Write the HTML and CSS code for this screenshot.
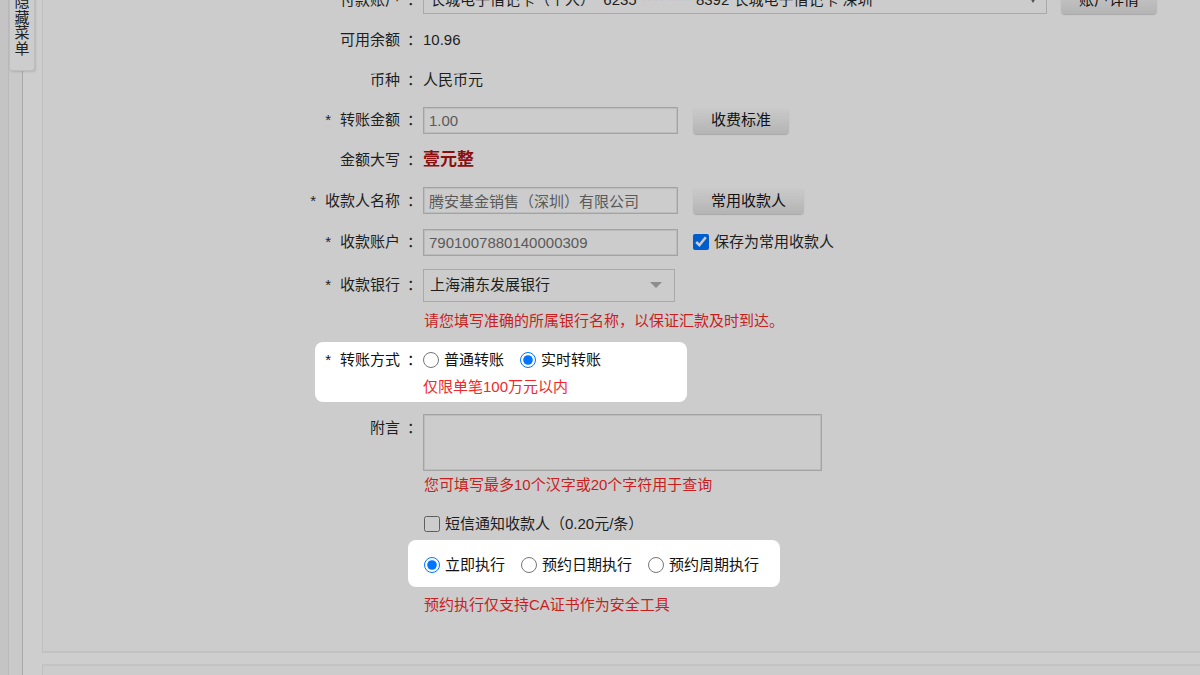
FILE: index.html
```html
<!DOCTYPE html>
<html lang="zh-CN">
<head>
  <meta charset="UTF-8" />
  <meta name="viewport" content="width=device-width, initial-scale=1.0"/>
  <title>单笔转账</title>
  <link rel="stylesheet" href="styles.css">
</head>
<body>
  <aside class="side">
    <div class="s1"></div>
    <div class="s2"></div>
    <div class="s3"></div>
    <div class="menu-tab"><span>隐藏菜单</span></div>
  </aside>

  <div class="main">
    <div class="panel">
      <form class="form">
        <div class="row">
          <div class="lbl">付款账户</div><div class="colon">：</div>
          <div class="val">
            <div class="select wide">
              <span>长城电子借记卡（个人） &nbsp;6235 **** **** 8392 长城电子借记卡 深圳</span>
              <i class="arrow small"></i>
            </div>
            <button type="button" class="btn top">账户详情</button>
          </div>
        </div>

        <div class="row">
          <div class="lbl">可用余额</div><div class="colon">：</div>
          <div class="val">10.96</div>
        </div>

        <div class="row">
          <div class="lbl">币种</div><div class="colon">：</div>
          <div class="val">人民币元</div>
        </div>

        <div class="row">
          <div class="lbl"><span class="req">*</span>转账金额</div><div class="colon">：</div>
          <div class="val">
            <input class="field" type="text" value="1.00">
            <button type="button" class="btn">收费标准</button>
          </div>
        </div>

        <div class="row">
          <div class="lbl">金额大写</div><div class="colon">：</div>
          <div class="val"><b class="amount">壹元整</b></div>
        </div>

        <div class="row r41">
          <div class="lbl"><span class="req">*</span>收款人名称</div><div class="colon">：</div>
          <div class="val">
            <input class="field" type="text" value="腾安基金销售（深圳）有限公司">
            <button type="button" class="btn">常用收款人</button>
          </div>
        </div>

        <div class="row r42">
          <div class="lbl"><span class="req">*</span>收款账户</div><div class="colon">：</div>
          <div class="val">
            <input class="field" type="text" value="7901007880140000309">
            <label class="check save"><input class="dim" type="checkbox" checked>保存为常用收款人</label>
          </div>
        </div>

        <div class="row r44">
          <div class="lbl"><span class="req">*</span>收款银行</div><div class="colon">：</div>
          <div class="val">
            <div class="select bank"><span>上海浦东发展银行</span><i class="arrow"></i></div>
          </div>
        </div>
        <div class="hint">请您填写准确的所属银行名称，以保证汇款及时到达。</div>

        <div class="spot way">
          <div class="row">
            <div class="lbl"><span class="req">*</span>转账方式</div><div class="colon">：</div>
            <div class="val">
              <label class="opt"><input type="radio" name="way">普通转账</label>
              <label class="opt"><input type="radio" name="way" checked>实时转账</label>
            </div>
          </div>
          <div class="hint">仅限单笔100万元以内</div>
        </div>

        <div class="row memo-row">
          <div class="lbl">附言</div><div class="colon">：</div>
          <div class="val"><textarea class="memo"></textarea></div>
        </div>
        <div class="hint">您可填写最多10个汉字或20个字符用于查询</div>

        <div class="sms">
          <label class="check"><input class="dim" type="checkbox">短信通知收款人（0.20元/条）</label>
        </div>

        <div class="spot when">
          <label class="opt"><input type="radio" name="when" checked>立即执行</label>
          <label class="opt"><input type="radio" name="when">预约日期执行</label>
          <label class="opt"><input type="radio" name="when">预约周期执行</label>
        </div>
        <div class="hint last">预约执行仅支持CA证书作为安全工具</div>
      </form>
    </div>
    <div class="panel next"></div>
  </div>
</body>
</html>
```

FILE: styles.css
```css
* {
  box-sizing: border-box;
}
html, body {
  margin: 0;
}
body {
  width: 1200px;
  height: 675px;
  overflow: hidden;
  display: flex;
  background: #cecece;
  color: #1e1e1e;
  font: 15px/20px "Liberation Sans", "Noto Sans CJK SC", sans-serif;
}

/* left menu strip */
.side {
  position: relative;
  width: 42px;
  flex-shrink: 0;
  display: flex;
}
.side .s1 {
  width: 9px;
  background: #c4c4c4;
  border-right: 1px solid #b9b9b9;
}
.side .s2 {
  width: 14px;
  background: #c9c9c9;
  border-right: 1px solid #a9a9a9;
}
.side .s3 {
  flex: 1;
  background: #cecece;
}
.menu-tab {
  position: absolute;
  left: 9px;
  top: -20px;
  width: 26px;
  padding: 14px 0 14px;
  background: #cdcdcd;
  border: 1px solid #bdbdbd;
  border-top: none;
  border-radius: 0 0 3px 3px;
  box-shadow: 1px 1px 2px rgba(0,0,0,0.12);
}
.menu-tab span {
  display: block;
  width: 15px;
  margin: 0 auto;
  font-size: 15px;
  line-height: 15.5px;
  color: #222;
}

/* content panels */
.main {
  flex: 1;
  display: flex;
  flex-direction: column;
}
.panel {
  height: 653px;
  background: #cccccc;
  border-left: 1px solid #c0c0c0;
  border-bottom: 2px solid #c2c2c2;
  overflow: hidden;
}
.panel.next {
  flex: 1;
  margin-top: 11px;
  border-bottom: none;
  border-top: 2px solid #c3c3c3;
}

.form {
  margin-top: -20px;
}
.row {
  display: grid;
  grid-template-columns: 357px 23px 1fr;
  align-items: center;
  height: 40px;
}
.row.r41 { height: 41px; }
.row.r42 { height: 42px; }
.row.r44 { height: 44px; }
.lbl {
  text-align: right;
  white-space: nowrap;
}
.req {
  margin-right: 9px;
}
.colon {
  padding-left: 7px;
}
.val {
  display: flex;
  align-items: center;
  white-space: nowrap;
}
.amount {
  font-size: 17px;
  color: #8c0e0e;
}

.field {
  width: 255px;
  height: 27px;
  padding: 0 5px;
  font: inherit;
  color: #5a5a5a;
  background: #cccccc;
  border: 1px solid #a3a3a3;
  box-shadow: inset 0 0 0 1px #bcbcbc;
  outline: none;
}
.btn {
  height: 27px;
  margin-left: 15px;
  padding: 0 18px;
  font: inherit;
  color: #111;
  border: none;
  border-radius: 4px;
  background: linear-gradient(#cbcbcb, #b4b4b4);
  box-shadow: 0 1px 1px rgba(0,0,0,0.18);
}
.btn.top {
  height: 28px;
  margin-left: 14px;
}

.select {
  display: flex;
  align-items: center;
  justify-content: space-between;
  padding: 0 12px 0 6px;
  border: 1px solid #a9a9a9;
  background: #cccccc;
}
.select.wide {
  width: 624px;
  height: 27px;
  padding-right: 10px;
}
.select.bank {
  width: 252px;
  height: 33px;
}
.arrow {
  width: 0;
  height: 0;
  border-left: 6px solid transparent;
  border-right: 6px solid transparent;
  border-top: 6px solid #8c8c8c;
}
.arrow.small {
  border-width: 5px 3px 0;
  border-top-color: #555;
}

.check {
  display: flex;
  align-items: center;
}
.check.save {
  margin-left: 15px;
}
.check input,
.opt input {
  width: 16px;
  height: 16px;
  margin: 0 5px 0 0;
}
.dim {
  filter: brightness(0.8);
}

.hint {
  height: 28px;
  margin-left: 381px;
  display: flex;
  align-items: center;
  color: #c81e1e;
}

/* white callouts */
.spot {
  width: 372px;
  background: #fff;
  border-radius: 8px;
  color: #111;
}
.spot.way {
  margin: 7px 0 0 272px;
  padding-bottom: 6px;
}
.spot.way .row {
  grid-template-columns: 85px 23px 1fr;
  height: 36px;
}
.spot.way .hint {
  height: 18px;
  margin-left: 108px;
  color: #f22828;
}
.opt {
  display: inline-flex;
  align-items: center;
  margin-right: 16px;
}

.memo-row {
  height: auto;
  margin-top: 12px;
  align-items: start;
}
.memo-row .lbl,
.memo-row .colon {
  padding-top: 4px;
}
.memo {
  display: block;
  width: 399px;
  height: 57px;
  resize: none;
  background: #cccccc;
  border: 1px solid #a3a3a3;
  box-shadow: inset 0 0 0 1px #bcbcbc;
  outline: none;
}

.sms {
  height: 33px;
  margin: 8px 0 0 381px;
  display: flex;
  align-items: center;
}

.spot.when {
  height: 47px;
  margin-left: 365px;
  padding: 3px 0 0 16px;
  display: flex;
  align-items: center;
}
.hint.last {
  height: 20px;
  margin-top: 8px;
}
```
